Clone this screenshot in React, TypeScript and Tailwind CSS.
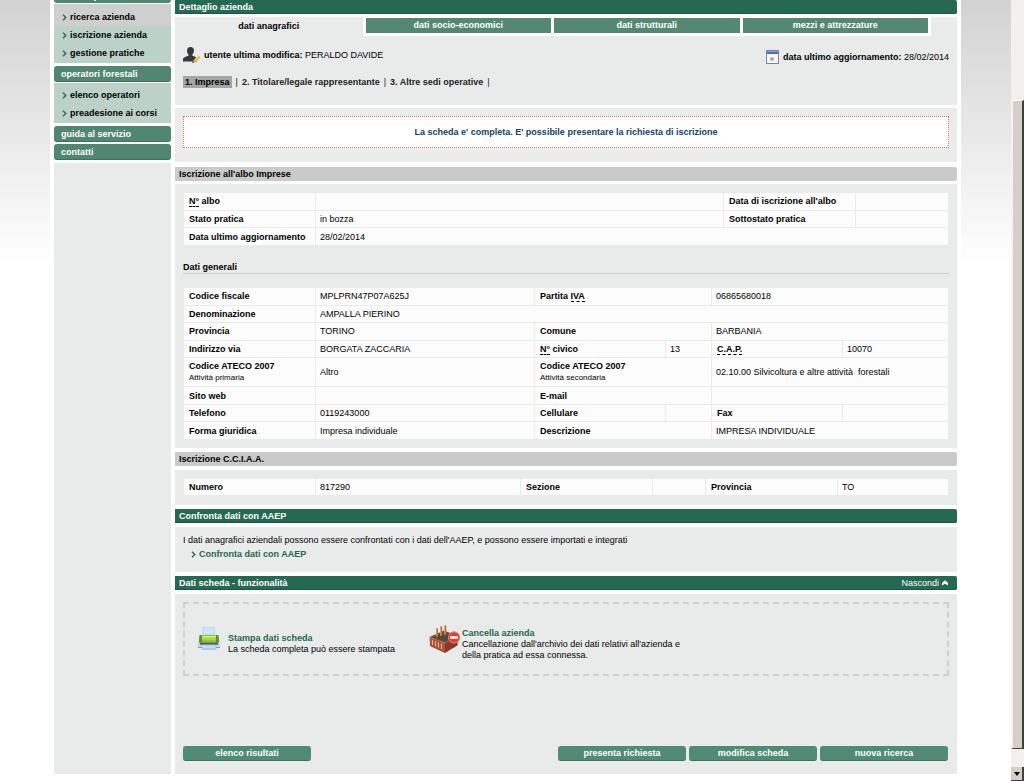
import type { ReactNode } from "react";
import clsx from "clsx";

const Chevron = ({ className }: { className?: string }) => (
  <svg viewBox="0 0 5 7" className={clsx("h-[7px] w-[5px] shrink-0", className)}>
    <path d="M1 0.7 3.8 3.5 1 6.3" fill="none" stroke="currentColor" strokeWidth="1.3" />
  </svg>
);

const UserIcon = () => (
  <svg viewBox="0 0 18 16" className="h-4 w-[18px] shrink-0">
    <path
      d="M7.500 0c2.500 0 3.700 1.700 3.500 4-.1 1.700-.9 2.700-1.600 3.500v1.300c2.400.8 4.400 1.300 4.600 3.600V14.500H0v-2.100c.2-2.300 3.300-2.800 5.500-3.600V7.500C4.700 6.700 4 5.700 4 4 3.900 1.700 5.100 0 7.500 0z"
      fill="#35383c"
    />
    <path d="M9.800 14.800 15.300 8.500 17.500 10.300 12 15.800z" fill="#e8b93c" />
    <path d="M10.500 14.300 15.300 8.800" stroke="#fff2c0" strokeWidth=".9" />
    <path d="M9 16 10 13.800 11.700 15.400z" fill="#7a5230" />
  </svg>
);

const CalendarIcon = () => (
  <svg viewBox="0 0 13 14" className="h-[14px] w-[13px] shrink-0">
    <rect x=".5" y=".5" width="12" height="13" fill="#f6f8fb" stroke="#6d87b8" />
    <rect x="1" y="1" width="11" height="3" fill="#4c6ca8" />
    <rect x="1" y="1" width="11" height="1" fill="#8ba3cc" />
    <rect x="4" y="7" width="4" height="4" fill="#d3cabb" />
    <rect x="5" y="8" width="2" height="2" fill="#a8977c" />
  </svg>
);

const PrinterIcon = () => (
  <svg viewBox="0 0 24 24" className="h-6 w-6 shrink-0">
    <path d="M5.500 0h12.500v9H5.500z" fill="#b9dafa" />
    <path d="M7 1h9.500v6H7z" fill="#cfe6ff" />
    <path d="M3 8h18l1 8H2z" fill="#86bf35" />
    <path d="M2.500 8h2.500v8H1.800zM19 8h2.500l.7 8H19z" fill="#5f8f3a" />
    <path d="M5 8.500h14v5H5z" fill="#a9d93c" />
    <path d="M5 9h14v1.500H5z" fill="#c8ee6a" />
    <path d="M1 15.500h22V20.500H1z" fill="#ccd3d9" />
    <path d="M3 15.500h18v2.200H3z" fill="#525c50" />
    <path d="M5.500 17.700h13l1 5.300H4.500z" fill="#a3cdf6" />
    <path d="M6 19h12v1.500H6z" fill="#d0e7ff" />
    <path d="M1 20.500h4M19 20.500h4" stroke="#8f9ba4" />
  </svg>
);

const FactoryIcon = () => (
  <svg viewBox="0 0 32 28" className="h-7 w-8 shrink-0">
    <path d="M0.500 12 15 5.500 29 11 16 18z" fill="#6b5543" />
    <path d="M3.500 12.300 15 7.200 25.500 11.200 16 16.200z" fill="#4f4a36" />
    <path d="M0.500 12 16 18v9.500L1 20.500z" fill="#b5543c" />
    <path d="M29 11 16 18v9.500L28.500 20z" fill="#8a3a2a" />
    <path d="M3.500 15v5M6.500 16.200v5M9.500 17.400v5M12.500 18.600v5.400" stroke="#e3b3a2" strokeWidth="1" />
    <path d="M8 3.500v8.500M12.200 1.500v9.500M16.300.5v9.500" stroke="#b96a3f" strokeWidth="2" />
    <path d="M7.400 3v8.500M11.600 1v9.500M15.700 0v9.500" stroke="#e6b184" strokeWidth=".7" />
    <path d="M1 20.500 16 27.500 28.500 20" fill="none" stroke="#6c3226" strokeWidth=".8" />
    <circle cx="25" cy="12.500" r="6" fill="#dd3f39" />
    <circle cx="25" cy="12.500" r="5.500" fill="none" stroke="#f08a80" strokeWidth=".8" />
    <rect x="21.300" y="11.200" width="7.400" height="2.600" fill="#fff" />
  </svg>
);

const MenuTitle = ({ children }: { children: ReactNode }) => (
  <a
    href="#"
    className="block h-4 rounded-[3px] border-b border-[#41705f] bg-[#518672] pl-[7px] leading-[16px] text-white"
  >
    {children}
  </a>
);

const MenuItem = ({ children, active }: { children: ReactNode; active?: boolean }) => (
  <li className={clsx(active ? "bg-[#cfcfcf] pt-1" : "")}>
    <a href="#" className="flex h-[18px] items-center gap-[3px] pl-2">
      <Chevron className="text-[#266650]" />
      {children}
    </a>
  </li>
);

const Title = ({ children, gray }: { children: ReactNode; gray?: boolean }) => (
  <h2
    className={clsx(
      "flex h-[14px] items-center justify-between pr-[9px] pl-1 font-bold",
      gray ? "rounded-r-xs bg-[#cacaca]" : "rounded-r-xs border-b border-[#1d5544] bg-[#266953] text-white"
    )}
  >
    {children}
  </h2>
);

const Th = ({ children, colSpan }: { children: ReactNode; colSpan?: number }) => (
  <th scope="row" colSpan={colSpan} className="bg-[#fcfcfc] pl-[5px] text-left font-bold">
    {children}
  </th>
);

const Td = ({ children, colSpan }: { children?: ReactNode; colSpan?: number }) => (
  <td colSpan={colSpan} className="bg-[#fcfcfc] pl-1">
    {children}
  </td>
);

const Abbr = ({ children, title }: { children: ReactNode; title: string }) => (
  <abbr title={title} className="border-b border-dashed border-black no-underline">
    {children}
  </abbr>
);

const ActionButton = ({ children }: { children: ReactNode }) => (
  <button
    type="button"
    className="h-[15px] w-[128px] rounded-[3px] border-b border-[#41705f] bg-[#518a75] text-center font-bold text-white"
  >
    {children}
  </button>
);

const tableClass = "w-full table-fixed border-separate border-spacing-[1px]";

const tabs = ["dati socio-economici", "dati strutturali", "mezzi e attrezzature"];

const Sidebar = () => (
  <nav className="flex w-[117px] shrink-0 flex-col font-bold">
    <div className="mb-px h-[3px] rounded-b-[3px] bg-[#518672] pl-10">
      <div className="h-px w-[2px] bg-white/80" />
    </div>
    <ul className="bg-[#bcd2c9] pb-px">
      <MenuItem active>ricerca azienda</MenuItem>
      <MenuItem>iscrizione azienda</MenuItem>
      <MenuItem>gestione pratiche</MenuItem>
    </ul>
    <div className="mt-[3px]">
      <MenuTitle>operatori forestali</MenuTitle>
    </div>
    <ul className="mt-px bg-[#bcd2c9] pt-[3px] pb-px">
      <MenuItem>elenco operatori</MenuItem>
      <MenuItem>preadesione ai corsi</MenuItem>
    </ul>
    <div className="mt-[3px] flex flex-col gap-[2px]">
      <MenuTitle>guida al servizio</MenuTitle>
      <MenuTitle>contatti</MenuTitle>
    </div>
    <div className="mt-[3px] flex-1 bg-[#e8ebea]" />
  </nav>
);

const Scrollbar = () => (
  <div className="flex w-[13px] shrink-0 flex-col bg-[#f1f0ec]">
    <div className="h-[100px]" />
    <div className="flex-1 border-t border-r-2 border-b border-l-2 border-t-white border-r-[#404040] border-b-[#404040] border-l-[#f4f3ee] bg-[#d4d0c8]" />
    <div className="h-[18px]" />
    <div className="flex h-[14px] items-center justify-center border-r-2 border-b border-[#404040] bg-[#d4d0c8]">
      <svg viewBox="0 0 6 4" className="h-1 w-[6px]">
        <path d="M0 0h6L3 4z" fill="#000" />
      </svg>
    </div>
  </div>
);

export default function App() {
  return (
    <div className="flex min-h-screen bg-white font-['Liberation_Sans',Arial,sans-serif] text-[9px] leading-[12px] text-black">
      <div className="flex flex-1 bg-[linear-gradient(#d2d2d2,#ffffff_265px)] px-[50px]">
        <div className="flex flex-1 gap-1 bg-white px-1 pb-[7px]">
          <Sidebar />

          <main className="flex min-w-0 flex-1 flex-col">
            <Title>Dettaglio azienda</Title>

            <section className="mt-[3px] h-[88px] bg-[#e8ebea]">
              <div className="mr-[26px] flex text-center font-bold">
                <a href="#" className="flex-1 leading-[18px]">
                  dati anagrafici
                </a>
                <div className="grid flex-3 grid-cols-3 gap-[3px] bg-white px-[3px] pt-px pb-[3px]">
                  {tabs.map((tab) => (
                    <a key={tab} href="#" className="bg-[#558873] leading-[15px] text-white">
                      {tab}
                    </a>
                  ))}
                </div>
              </div>
              <div className="mt-[10px] flex items-center justify-between px-2">
                <div className="flex items-center gap-[3px]">
                  <UserIcon />
                  <p>
                    <b>utente ultima modifica:</b> PERALDO DAVIDE
                  </p>
                </div>
                <div className="flex items-center gap-1 pt-1">
                  <CalendarIcon />
                  <p>
                    <b>data ultimo aggiornamento:</b> 28/02/2014
                  </p>
                </div>
              </div>
              <div className="mt-3 flex gap-1 px-2 font-bold text-[#222]">
                <a href="#" className="bg-[#a5a5a5] px-[2px] text-black">
                  1. Impresa
                </a>
                <span className="font-normal">|</span>
                <a href="#">2. Titolare/legale rappresentante</a>
                <span className="font-normal">|</span>
                <a href="#">3. Altre sedi operative</a>
                <span className="font-normal">|</span>
              </div>
            </section>

            <section className="mt-[3px] bg-[#ebebeb] px-2 pt-2 pb-[14px]">
              <p className="border border-dotted border-[#dd6a6a] bg-white text-center leading-[30px] font-bold text-[#0d4168]">
                La scheda e' completa. E' possibile presentare la richiesta di iscrizione
              </p>
            </section>

            <div className="mt-[5px]">
              <Title gray>Iscrizione all'albo Imprese</Title>
            </div>
            <section className="mt-[3px] bg-[#e9eaea] p-2">
              <table className={clsx(tableClass, "h-[54px]")}>
                <colgroup>
                  <col className="w-[131px]" />
                  <col />
                  <col className="w-[131px]" />
                  <col className="w-[92px]" />
                </colgroup>
                <tbody>
                  <tr>
                    <Th>
                      <Abbr title="Numero">N°</Abbr> albo
                    </Th>
                    <Td />
                    <Th>Data di iscrizione all'albo</Th>
                    <Td />
                  </tr>
                  <tr>
                    <Th>Stato pratica</Th>
                    <Td>in bozza</Td>
                    <Th>Sottostato pratica</Th>
                    <Td />
                  </tr>
                  <tr>
                    <Th>Data ultimo aggiornamento</Th>
                    <Td colSpan={3}>28/02/2014</Td>
                  </tr>
                </tbody>
              </table>

              <h3 className="mt-[15px] mb-[13px] border-b border-[#c3d1cc] font-bold">Dati generali</h3>

              <table className={clsx(tableClass, "h-[153px]")}>
                <colgroup>
                  <col className="w-[131px]" />
                  <col />
                  <col className="w-[130px]" />
                  <col className="w-[45px]" />
                  <col className="w-[130px]" />
                  <col className="w-[105px]" />
                </colgroup>
                <tbody>
                  <tr>
                    <Th>Codice fiscale</Th>
                    <Td>MPLPRN47P07A625J</Td>
                    <Th colSpan={2}>
                      Partita <Abbr title="Imposta sul Valore Aggiunto">IVA</Abbr>
                    </Th>
                    <Td colSpan={2}>06865680018</Td>
                  </tr>
                  <tr>
                    <Th>Denominazione</Th>
                    <Td colSpan={5}>AMPALLA PIERINO</Td>
                  </tr>
                  <tr>
                    <Th>Provincia</Th>
                    <Td>TORINO</Td>
                    <Th colSpan={2}>Comune</Th>
                    <Td colSpan={2}>BARBANIA</Td>
                  </tr>
                  <tr>
                    <Th>Indirizzo via</Th>
                    <Td>BORGATA ZACCARIA</Td>
                    <Th>
                      <Abbr title="Numero">N°</Abbr> civico
                    </Th>
                    <Td>13</Td>
                    <Th>
                      <Abbr title="Codice di Avviamento Postale">C.A.P.</Abbr>
                    </Th>
                    <Td>10070</Td>
                  </tr>
                  <tr className="h-7">
                    <Th>
                      Codice ATECO 2007
                      <span className="block text-[8px] font-normal">Attività primaria</span>
                    </Th>
                    <Td>Altro</Td>
                    <Th colSpan={2}>
                      Codice ATECO 2007
                      <span className="block text-[8px] font-normal">Attività secondaria</span>
                    </Th>
                    <Td colSpan={2}>02.10.00 Silvicoltura e altre attività&nbsp; forestali</Td>
                  </tr>
                  <tr>
                    <Th>Sito web</Th>
                    <Td />
                    <Th colSpan={2}>E-mail</Th>
                    <Td colSpan={2} />
                  </tr>
                  <tr>
                    <Th>Telefono</Th>
                    <Td>0119243000</Td>
                    <Th>Cellulare</Th>
                    <Td />
                    <Th>Fax</Th>
                    <Td />
                  </tr>
                  <tr>
                    <Th>Forma giuridica</Th>
                    <Td>Impresa individuale</Td>
                    <Th colSpan={2}>Descrizione</Th>
                    <Td colSpan={2}>IMPRESA INDIVIDUALE</Td>
                  </tr>
                </tbody>
              </table>
            </section>

            <div className="mt-1">
              <Title gray>Iscrizione C.C.I.A.A.</Title>
            </div>
            <section className="mt-1 bg-[#e9eaea] px-2 pt-2 pb-[9px]">
              <table className={clsx(tableClass, "h-[18px]")}>
                <colgroup>
                  <col className="w-[131px]" />
                  <col />
                  <col className="w-[131px]" />
                  <col className="w-[52px]" />
                  <col className="w-[131px]" />
                  <col className="w-[110px]" />
                </colgroup>
                <tbody>
                  <tr>
                    <Th>Numero</Th>
                    <Td>817290</Td>
                    <Th>Sezione</Th>
                    <Td />
                    <Th>Provincia</Th>
                    <Td>TO</Td>
                  </tr>
                </tbody>
              </table>
            </section>

            <div className="mt-1">
              <Title>Confronta dati con AAEP</Title>
            </div>
            <section className="mt-1 bg-[#eaebeb] px-2 pt-[7px] pb-3">
              <p>
                I dati anagrafici aziendali possono essere confrontati con i dati dell'AAEP, e possono essere importati e
                integrati
              </p>
              <a href="#" className="mt-[2px] ml-2 flex items-center gap-[3px] font-bold text-[#266650]">
                <Chevron />
                Confronta dati con AAEP
              </a>
            </section>

            <div className="mt-1">
              <Title>
                Dati scheda - funzionalità
                <button type="button" className="flex items-center gap-[3px] font-normal">
                  Nascondi
                  <svg viewBox="0 0 6 6" className="h-[6px] w-[6px]">
                    <path d="M0 5.500V3L3 .3 6 3v2.500L3 3.700z" fill="#fff" />
                  </svg>
                </button>
              </Title>
            </div>
            <section className="mt-1 flex flex-1 flex-col justify-between bg-[#e8ebea] px-2 pt-2 pb-[13px]">
              <div className="flex h-[74px] border-2 border-dashed border-[#cfcfcf] pl-3 leading-[11px]">
                <div className="flex w-[232px] items-center gap-[7px]">
                  <PrinterIcon />
                  <p className="pt-[10px]">
                    <a href="#" className="block font-bold text-[#266650]">
                      Stampa dati scheda
                    </a>
                    La scheda completa può essere stampata
                  </p>
                </div>
                <div className="flex items-center gap-px">
                  <FactoryIcon />
                  <p className="w-[226px] pt-[10px]">
                    <a href="#" className="block font-bold text-[#266650]">
                      Cancella azienda
                    </a>
                    Cancellazione dall'archivio dei dati relativi all'azienda e della pratica ad essa connessa.
                  </p>
                </div>
              </div>
              <div className="flex justify-between pr-px">
                <ActionButton>elenco risultati</ActionButton>
                <div className="flex gap-[3px]">
                  <ActionButton>presenta richiesta</ActionButton>
                  <ActionButton>modifica scheda</ActionButton>
                  <ActionButton>nuova ricerca</ActionButton>
                </div>
              </div>
            </section>
          </main>
        </div>
      </div>
      <Scrollbar />
    </div>
  );
}
